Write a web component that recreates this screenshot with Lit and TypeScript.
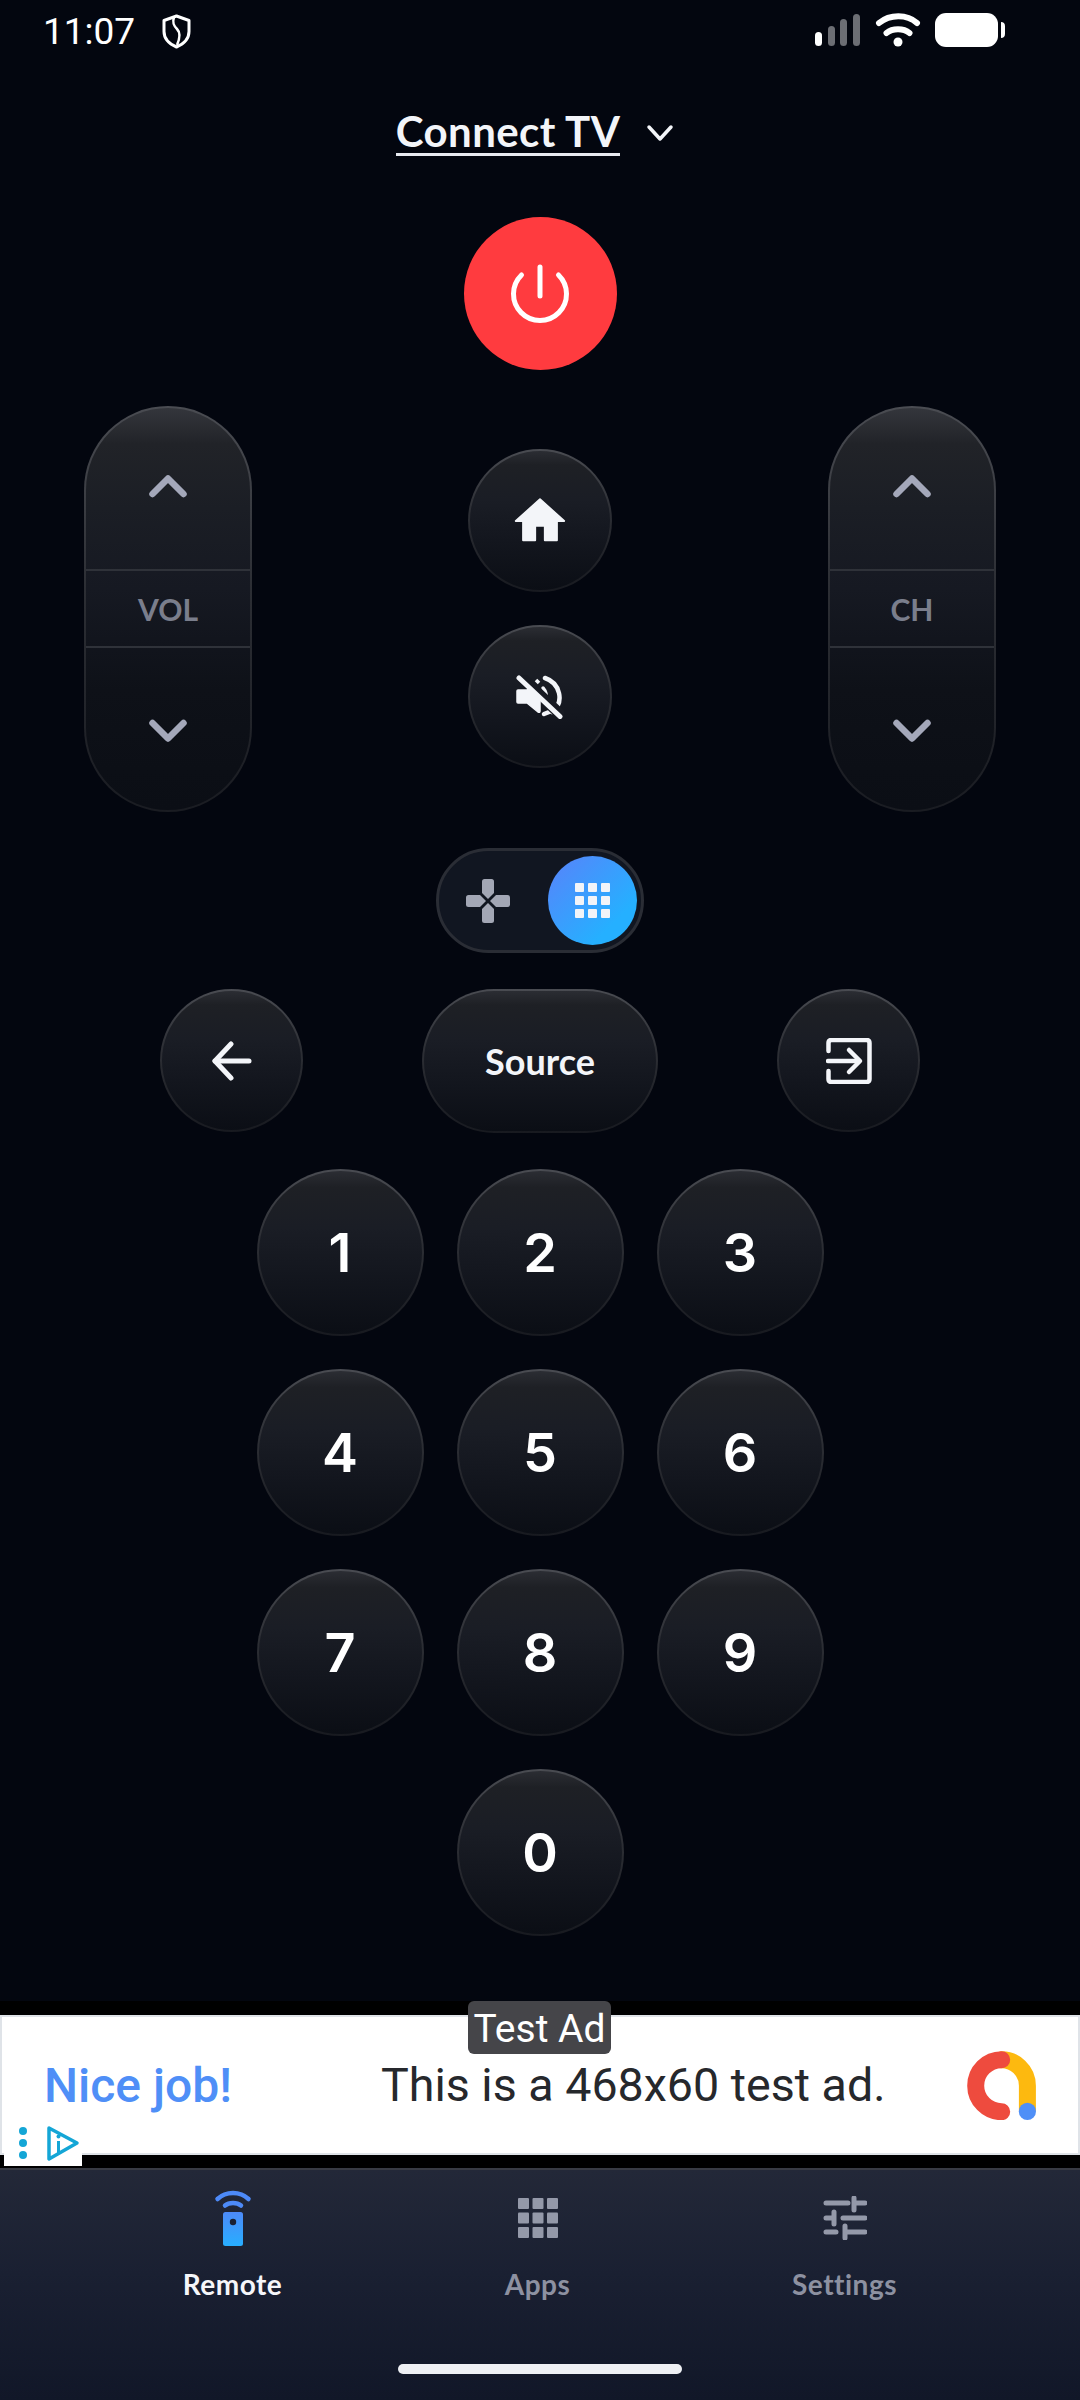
import { LitElement, html, svg, css } from 'lit';
import { customElement } from 'lit/decorators.js';

const DIGITS = ['1', '2', '3', '4', '5', '6', '7', '8', '9'];

const chevron = (up: boolean) => html`
  <svg class="chev" width="38" height="24" viewBox="0 0 38 24" fill="none" stroke="#a4a8ba" stroke-width="6.5" stroke-linecap="round" stroke-linejoin="round">
    <path d=${up ? 'M3.5 20 19 4.5 34.5 20' : 'M3.5 4 19 19.5 34.5 4'}></path>
  </svg>`;

const squares = (size: number, gap: number, fill: string) => {
  const cells = [0, 1, 2].flatMap((r) => [0, 1, 2].map((c) => [c, r]));
  const total = size * 3 + gap * 2;
  return html`<svg width=${total} height=${total} viewBox="0 0 ${total} ${total}" fill=${fill}>
    ${cells.map(([c, r]) => svg`<rect x=${c * (size + gap)} y=${r * (size + gap)} width=${size} height=${size} rx="1"></rect>`)}
  </svg>`;
};

@customElement('app-root')
export class AppRoot extends LitElement {
  static styles = css`
    :host {
      display: block;
      position: relative;
      width: 1080px;
      height: 2400px;
      overflow: hidden;
      background: #03060f;
      color: #f3f5f9;
      font-family: Lato, 'Noto Sans', sans-serif;
    }
    .status {
      display: flex;
      align-items: center;
      height: 62px;
      padding: 0 75px 0 43px;
      box-sizing: border-box;
      font-family: Roboto, sans-serif;
      font-size: 37px;
      color: #fff;
    }
    .shield {
      margin-left: 27px;
    }
    .status-right {
      margin-left: auto;
      display: flex;
      align-items: center;
    }
    .title-row {
      display: flex;
      justify-content: center;
      align-items: center;
      gap: 16px;
      margin-top: 47px;
    }
    .title {
      font-size: 42px;
      font-weight: 700;
      line-height: 44px;
      letter-spacing: 0.4px;
      border-bottom: 3px solid #e8eaf0;
    }
    .power {
      width: 153px;
      height: 153px;
      border-radius: 50%;
      background: #ff3b3f;
      display: flex;
      align-items: center;
      justify-content: center;
      margin: 61px auto 0;
    }
    .glass {
      box-sizing: border-box;
      border: 2px solid transparent;
      background:
        linear-gradient(180deg, #2b2d33 0%, #1e2025 10%, #1a1d25 35%, #13161e 65%, #0b0e15 100%) padding-box,
        linear-gradient(180deg, #4a4c52 0%, #2e3036 40%, #181a20 100%) border-box;
      display: flex;
      align-items: center;
      justify-content: center;
      color: #f3f5f9;
    }
    .round {
      width: 144px;
      height: 143px;
      border-radius: 50%;
    }
    .top-row {
      display: flex;
      justify-content: space-between;
      padding: 0 84px;
      margin-top: 36px;
    }
    .center-col {
      display: flex;
      flex-direction: column;
      gap: 33px;
      padding-top: 43px;
    }
    .pill {
      width: 168px;
      height: 406px;
      border-radius: 84px;
      box-sizing: border-box;
      border: 2px solid transparent;
      background:
        linear-gradient(180deg, #34363c 0%, #212328 9%, #1b1e25 25%, #161922 45%, #0e1118 70%, #0b0e15 100%) padding-box,
        linear-gradient(180deg, #4a4c52 0%, #2c2e34 45%, #1a1c22 100%) border-box;
      display: grid;
      grid-template-rows: 161px 79px 1fr;
    }
    .pill-part {
      display: flex;
      align-items: center;
      justify-content: center;
    }
    .pill-up {
      align-items: flex-start;
    }
    .pill-up .chev {
      margin-top: 66px;
    }
    .pill-down {
      align-items: flex-start;
    }
    .pill-down .chev {
      margin-top: 71px;
    }
    .pill-label {
      font-size: 30px;
      font-weight: 700;
      color: #7a7e8c;
      border-top: 2px solid #2f3239;
      border-bottom: 2px solid #2f3239;
    }
    .toggle {
      box-sizing: border-box;
      width: 208px;
      height: 105px;
      margin: 36px auto 0;
      border-radius: 53px;
      border: 3px solid #2a2d35;
      background: #111621;
      display: flex;
      align-items: center;
      padding: 0 4px 0 27px;
    }
    .thumb {
      width: 89px;
      height: 89px;
      border-radius: 50%;
      margin-left: auto;
      background: linear-gradient(135deg, #5288fb 10%, #25b0ff 75%);
      display: flex;
      align-items: center;
      justify-content: center;
    }
    .action-row {
      display: flex;
      justify-content: center;
      gap: 119px;
      margin-top: 36px;
    }
    .action-row .round {
      width: 143px;
    }
    .source {
      width: 236px;
      height: 144px;
      border-radius: 72px;
      font-size: 36px;
      font-weight: 700;
    }
    .numpad {
      display: grid;
      grid-template-columns: repeat(3, 167px);
      gap: 33px;
      justify-content: center;
      margin-top: 36px;
    }
    .num {
      width: 167px;
      height: 167px;
      border-radius: 50%;
      font-family: Inter, Lato, sans-serif;
      font-size: 54px;
      font-weight: 600;
      color: #fff;
    }
    .zero {
      grid-column: 2;
    }
    .ad {
      position: absolute;
      left: 0;
      right: 0;
      top: 2001px;
      height: 167px;
      background: #000;
      padding-top: 14px;
      box-sizing: border-box;
    }
    .banner {
      height: 140px;
      box-sizing: border-box;
      background: #fff;
      border: 2px solid #dfe3e8;
      display: flex;
      align-items: center;
      padding: 0 42px;
      font-family: Roboto, sans-serif;
    }
    .nice {
      font-size: 48px;
      font-weight: 500;
      color: #4f8ff7;
    }
    .ad-text {
      font-size: 46.6px;
      color: #26282c;
      margin-left: 149px;
    }
    .ad-logo {
      margin-left: auto;
    }
    .test-label {
      position: absolute;
      left: 468px;
      top: 0;
      width: 143px;
      height: 53px;
      padding-top: 3px;
      box-sizing: border-box;
      border-radius: 6px;
      background: #454549;
      color: #fff;
      font-family: Roboto, sans-serif;
      font-size: 39px;
      display: flex;
      align-items: center;
      justify-content: center;
    }
    .ad-badge {
      position: absolute;
      left: 4px;
      bottom: 2px;
      width: 78px;
      height: 44px;
      background: #fff;
    }
    .nav {
      position: absolute;
      left: 0;
      right: 0;
      top: 2168px;
      bottom: 0;
      box-sizing: border-box;
      border-top: 2px solid #383b44;
      background: linear-gradient(180deg, #232838 0%, #1a2032 45%, #111728 100%);
      display: flex;
      flex-direction: column;
    }
    .tabs {
      display: grid;
      grid-template-columns: 305px 305px 309px;
      margin: 20px 0 0 80px;
    }
    .tab {
      display: flex;
      flex-direction: column;
      align-items: center;
      font-size: 28px;
      line-height: 34px;
      letter-spacing: 0.5px;
      font-weight: 700;
      color: #8d91a1;
    }
    .tab.active {
      color: #f5f6fa;
    }
    .tab-icon {
      height: 56px;
      display: flex;
      align-items: center;
      margin-bottom: 21px;
    }
    .home-bar {
      width: 284px;
      height: 10px;
      border-radius: 5px;
      background: #eef0f4;
      margin: 63px 0 0 398px;
    }
  `;

  private pill(label: string) {
    return html`<div class="pill">
      <div class="pill-part pill-up">${chevron(true)}</div>
      <div class="pill-part pill-label">${label}</div>
      <div class="pill-part pill-down">${chevron(false)}</div>
    </div>`;
  }

  render() {
    return html`
      <div class="status">
        <span>11:07</span>
        <svg class="shield" width="29" height="35" viewBox="0 0 29 35" fill="none" stroke="#fff" stroke-width="3" stroke-linejoin="round">
          <path d="M14.5 2 27 6.5v11c0 7.5-5.5 12.500-12.500 15.500C7.500 30 2 25 2 17.500v-11z"></path>
          <path d="M12 3c-2 6 0 9 3 12 3 3 3.500 8 0 16" stroke-width="2.500"></path>
        </svg>
        <div class="status-right">
          <svg width="190" height="36" viewBox="0 0 190 36">
            <rect x="0" y="19" width="7" height="14" rx="3.500" fill="#fff"></rect>
            <rect x="13" y="13" width="7" height="20" rx="3.500" fill="#6c6e74"></rect>
            <rect x="25" y="6" width="7" height="27" rx="3.500" fill="#6c6e74"></rect>
            <rect x="38" y="1" width="7" height="32" rx="3.500" fill="#6c6e74"></rect>
            <g fill="none" stroke="#fff" stroke-width="6" stroke-linecap="round">
              <path d="M64 10c11-9 28-9 38 0"></path>
              <path d="M71.500 20c6-5 17-5 23 0"></path>
            </g>
            <circle cx="83" cy="29" r="4.500" fill="#fff"></circle>
            <rect x="120" y="0" width="63" height="34" rx="11" fill="#fff"></rect>
            <path d="M186 9c2.500 0 4 1.500 4 4v8c0 2.500-1.500 4-4 4z" fill="#fff"></path>
          </svg>
        </div>
      </div>

      <div class="title-row">
        <span class="title">Connect TV</span>
        <svg width="48" height="24" viewBox="0 0 48 24" fill="none" stroke="#f3f5f9" stroke-width="3.500" stroke-linecap="round" stroke-linejoin="round">
          <path d="M13 6 24 18 35 6"></path>
        </svg>
      </div>

      <div class="power">
        <svg width="60" height="60" viewBox="0 0 60 60" fill="none" stroke="#fff" stroke-width="5" stroke-linecap="round">
          <path d="M30 3v29"></path>
          <path d="M11.500 11A26.500 26.500 0 1 0 48.500 11"></path>
        </svg>
      </div>

      <div class="top-row">
        ${this.pill('VOL')}
        <div class="center-col">
          <div class="glass round">
            <svg width="58" height="58" viewBox="0 0 24 24" fill="#f3f5f9" stroke="#f3f5f9" stroke-width="0.8" stroke-linejoin="round">
              <path d="M10 20v-6h4v6h5v-8h3L12 3 2 12h3v8z"></path>
            </svg>
          </div>
          <div class="glass round">
            <svg width="48" height="44" viewBox="0 0 48 44" fill="none">
              <path d="M29 3C44 8 49 27 36 37" stroke="#f3f5f9" stroke-width="4.500" stroke-linecap="round"></path>
              <path d="M28 39 37 35.500" stroke="#f3f5f9" stroke-width="4.500" stroke-linecap="round"></path>
              <path d="M27 13c3.500 4 4 8 3 13" stroke="#f3f5f9" stroke-width="3.500" stroke-linecap="round"></path>
              <path d="M20 5l3 3" stroke="#f3f5f9" stroke-width="3.500"></path>
              <path d="M4 1 46 41" stroke="#171a22" stroke-width="11"></path>
              <path d="M2 15h9l1-1 12 12v10q0 2-2 1L11 28H2q-1 0-1-1V16q0-1 1-1z" fill="#f3f5f9" stroke="#f3f5f9" stroke-width="1.500" stroke-linejoin="round"></path>
              <path d="M3 3 44 41.500" stroke="#f3f5f9" stroke-width="5" stroke-linecap="round"></path>
            </svg>
          </div>
        </div>
        ${this.pill('CH')}
      </div>

      <div class="toggle">
        <svg width="44" height="44" viewBox="0 0 44 44" fill="#a3a7b5">
          ${[0, 90, 180, 270].map(
            (a) => svg`<path transform="rotate(${a} 22 22)" d="M16 2.500Q16 0 18.500 0h7Q28 0 28 2.500V14l-6 6-6-6z"></path>`,
          )}
        </svg>
        <div class="thumb">${squares(9, 4, '#f2f4f8')}</div>
      </div>

      <div class="action-row">
        <div class="glass round">
          <svg width="40" height="40" viewBox="0 0 40 40" fill="none" stroke="#f3f5f9" stroke-width="5" stroke-linecap="round" stroke-linejoin="round">
            <path d="M37 20H3"></path>
            <path d="M19 3 3 20l16 17"></path>
          </svg>
        </div>
        <div class="glass source">Source</div>
        <div class="glass round">
          <svg width="46" height="46" viewBox="0 0 46 46" fill="none" stroke="#f3f5f9" stroke-width="4.500" stroke-linecap="round" stroke-linejoin="round">
            <path d="M2.500 13V5q0-3 3-3h35q3 0 3 3v36q0 3-3 3h-35q-3 0-3-3v-8"></path>
            <path d="M2 23h30"></path>
            <path d="M23 12l11 11-11 11"></path>
          </svg>
        </div>
      </div>

      <div class="numpad">
        ${DIGITS.map((d) => html`<div class="glass num">${d}</div>`)}
        <div class="glass num zero">0</div>
      </div>

      <div class="ad">
        <div class="banner">
          <span class="nice">Nice job!</span>
          <span class="ad-text">This is a 468x60 test ad.</span>
          <svg class="ad-logo" width="69" height="69" viewBox="0 0 69 69" fill="none" stroke-width="17">
            <path d="M33 8.700A26 26 0 0 1 60.400 34.700V60" stroke="#fdb90f"></path>
            <path d="M34.700 8.700a26 26 0 0 0 0 52" stroke="#ee4b3e" stroke-linecap="round"></path>
            <circle cx="60.400" cy="60.400" r="8.600" fill="#4f8ff7"></circle>
          </svg>
        </div>
        <div class="test-label">Test Ad</div>
        <div class="ad-badge">
          <svg width="78" height="44" viewBox="0 0 78 44" fill="#14a6d6">
            <circle cx="19" cy="9" r="4"></circle>
            <circle cx="19" cy="21" r="4"></circle>
            <circle cx="19" cy="33" r="4"></circle>
            <path d="M45 6 73 21 45 37z" fill="none" stroke="#14a6d6" stroke-width="3.500" stroke-linejoin="round"></path>
            <rect x="53" y="19" width="3" height="12"></rect>
            <circle cx="54.500" cy="14.500" r="2"></circle>
          </svg>
        </div>
      </div>

      <div class="nav">
        <div class="tabs">
          <div class="tab active">
            <div class="tab-icon">
              <svg width="38" height="56" viewBox="0 0 38 56">
                <defs>
                  <linearGradient id="remoteBody" x1="0" y1="0" x2="0" y2="1">
                    <stop offset="0" stop-color="#4d8af8"></stop>
                    <stop offset="1" stop-color="#27aeff"></stop>
                  </linearGradient>
                </defs>
                <g fill="none" stroke="#4d8af8" stroke-width="4.500" stroke-linecap="round">
                  <path d="M3.500 9C12 1 26 1 34.500 9"></path>
                  <path d="M11 15.500C15 12 23 12 27 15.500"></path>
                </g>
                <rect x="9" y="22" width="20" height="34" rx="2.500" fill="url(#remoteBody)"></rect>
                <circle cx="19" cy="32" r="3.200" fill="#1a2032"></circle>
              </svg>
            </div>
            <span>Remote</span>
          </div>
          <div class="tab">
            <div class="tab-icon">${squares(11, 3.5, '#9499a9')}</div>
            <span>Apps</span>
          </div>
          <div class="tab">
            <div class="tab-icon">
              <svg width="44" height="44" viewBox="0 0 44 44" fill="none" stroke="#9499a9" stroke-width="5" stroke-linecap="round">
                <path d="M3 7h22M31 7h11M31 2v12"></path>
                <path d="M3 22h8M20 22h22M11 16v12"></path>
                <path d="M3 36h10M22 36h20M22 30v12"></path>
              </svg>
            </div>
            <span>Settings</span>
          </div>
        </div>
        <div class="home-bar"></div>
      </div>
    `;
  }
}
